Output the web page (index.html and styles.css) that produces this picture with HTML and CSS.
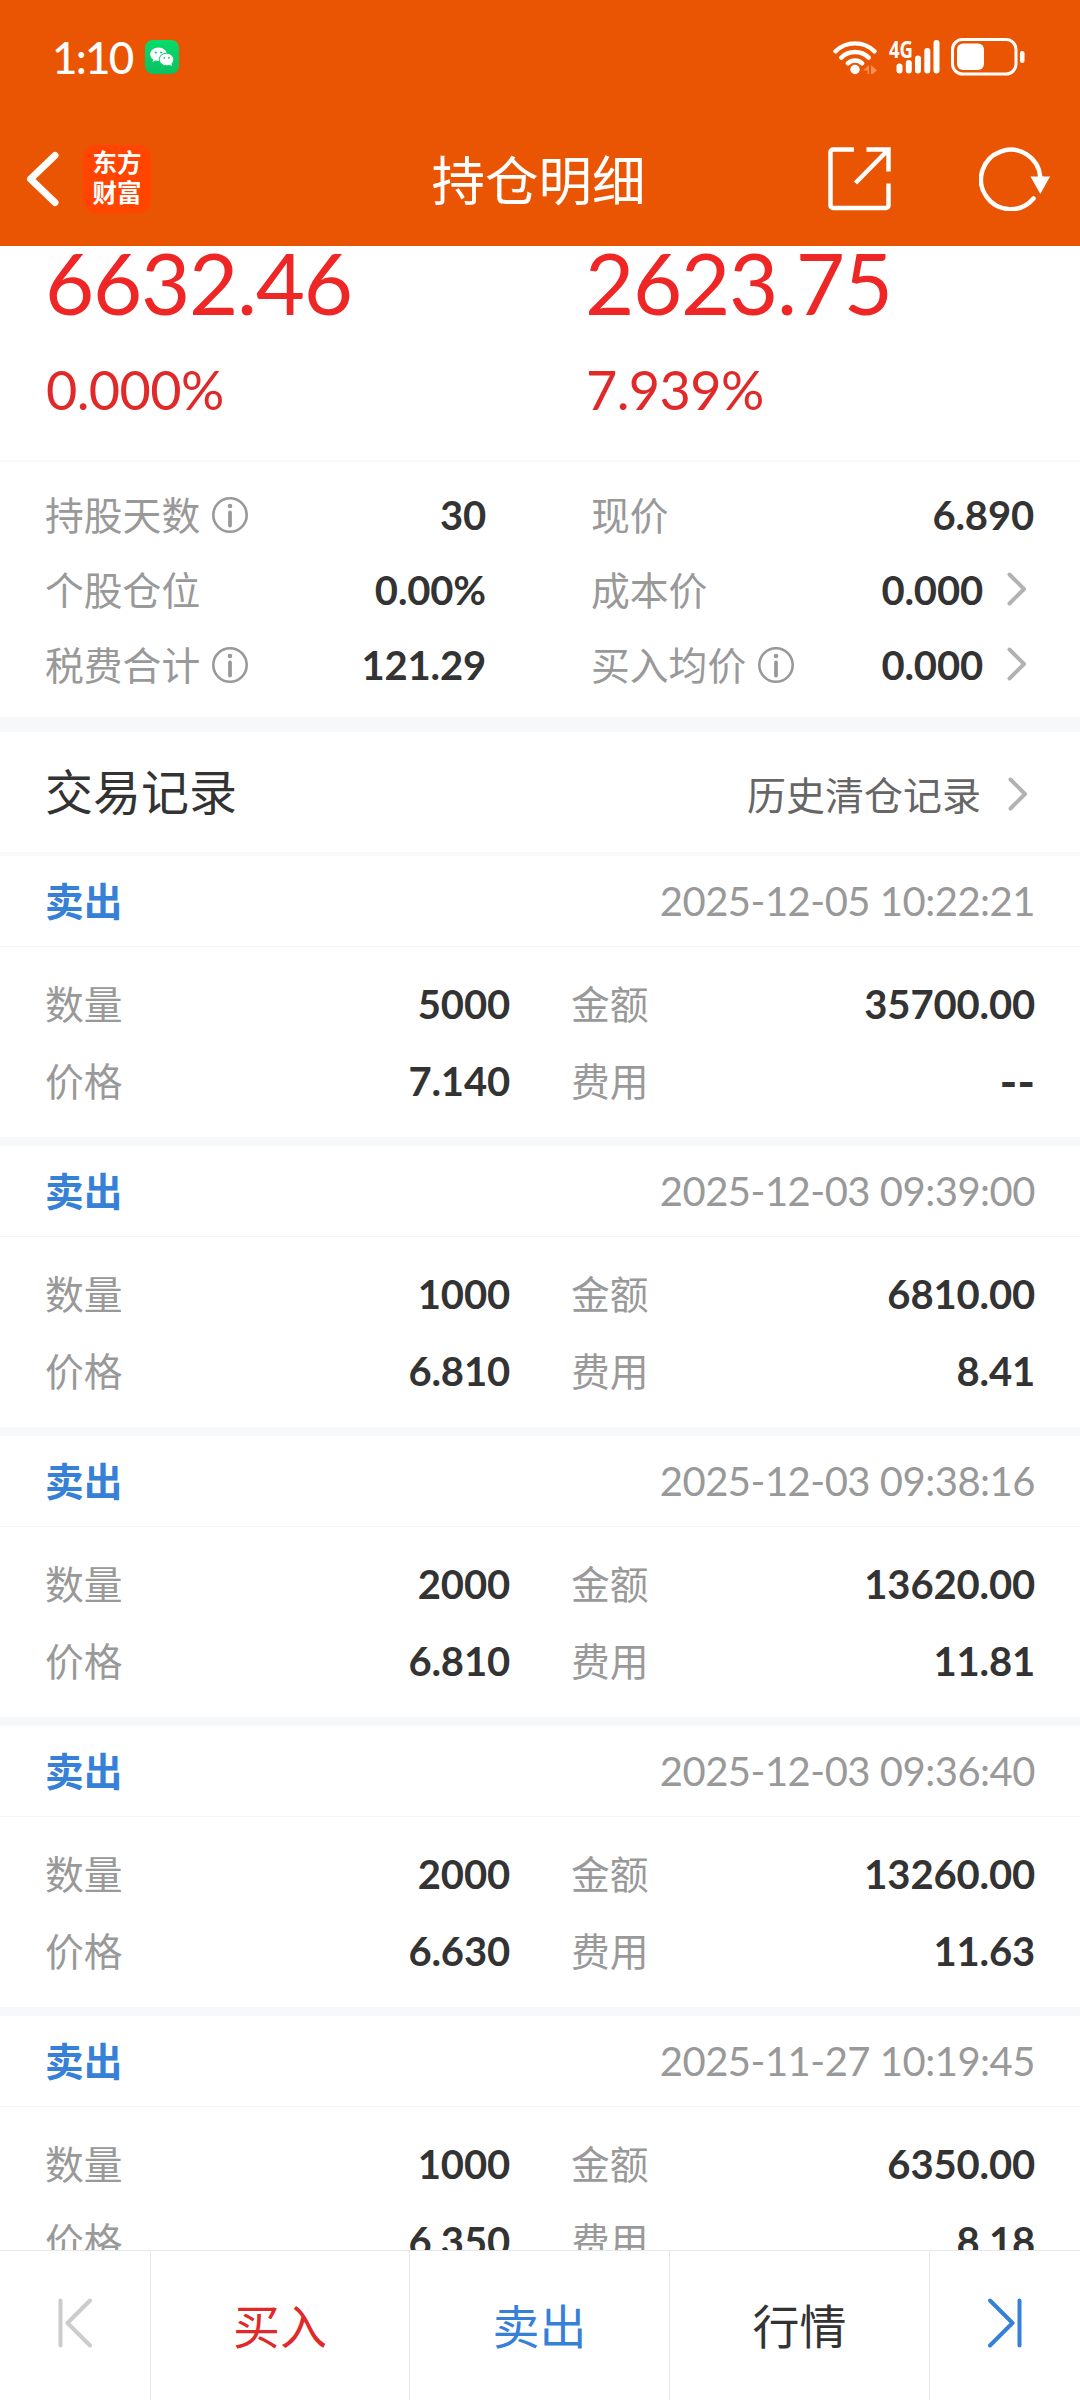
FILE: index.html
```html
<!DOCTYPE html>
<html lang="zh-CN">
<head>
  <meta charset="UTF-8" />
  <meta name="viewport" content="width=device-width, initial-scale=1.0" />
  <title>持仓明细</title>
  <link rel="stylesheet" href="styles.css">
</head>
<body>
  <header>
    <div class="status">
      <span class="time">1:10</span>
      <svg class="wechat" width="34" height="34" viewBox="0 0 34 34">
        <defs>
          <linearGradient id="verde" x1="0" y1="0" x2="0" y2="1"><stop offset="0" stop-color="#06dc6c" /><stop offset="1" stop-color="#0ac160" /></linearGradient>
        </defs>
        <rect width="34" height="34" rx="8" fill="url(#verde)" />
        <path d="M13.500 7.500C8.800 7.500 5.200 10.500 5.200 14.300c0 2.200 1.200 4 3 5.200l-.7 2.500 2.900-1.500c1 .3 2 .4 3.100.4 4.700 0 8.300-3 8.300-6.700s-3.600-6.700-8.300-6.700z" fill="#fff" />
        <ellipse cx="21.500" cy="19.500" rx="7.300" ry="6.300" fill="#fff" stroke="#09cf66" stroke-width="1" />
        <path d="M24 24.500l3 1.500-.6-3z" fill="#fff" />
        <circle cx="10.800" cy="12.500" r="1.100" fill="#09cf66" /><circle cx="16.200" cy="12.500" r="1.100" fill="#09cf66" />
        <circle cx="19.200" cy="17.800" r=".9" fill="#09cf66" /><circle cx="23.900" cy="17.800" r=".9" fill="#09cf66" />
      </svg>
      <svg class="wifi" width="44" height="36" viewBox="0 0 44 36" fill="none" stroke="#fff" stroke-width="4.400" stroke-linecap="round">
        <path d="M2.500 12.300a28 28 0 0 1 39 0" />
        <path d="M8.300 18.600a19.500 19.500 0 0 1 27.400 0" />
        <path d="M14.800 24.300a10.500 10.500 0 0 1 14.400 0" />
        <circle cx="22" cy="30.500" r="4.700" fill="#fff" stroke="none" />
        <path d="M30 31.500l6-5.500v9h-1.500v-3.500zM38 26l6 5.500-4.500 3.500H38z" fill="#ff9055" stroke="none" />
      </svg>
      <svg class="signal" width="52" height="36" viewBox="0 0 52 36">
        <text x="0" y="18.500" class="net" textLength="24" lengthAdjust="spacingAndGlyphs">4G</text>
        <g stroke="#fff" stroke-width="6" stroke-linecap="round">
          <path d="M10.500 27.500v4M19.800 24v7.500M29 19.500v12M38.300 12v19.500M47.500 4v27.500" />
        </g>
      </svg>
      <svg class="battery" width="74" height="38" viewBox="0 0 74 38">
        <rect x="1.500" y="1.500" width="63.500" height="34.500" rx="10" fill="none" stroke="#fff" stroke-width="3" />
        <rect x="6" y="5.500" width="27" height="26.500" rx="6" fill="#fff" />
        <rect x="69" y="13" width="4.500" height="12" rx="2.200" fill="#fff" />
      </svg>
    </div>
    <div class="bar">
      <div class="bar-left">
        <svg class="back" width="33" height="56" viewBox="0 0 33 56" fill="none" stroke="#fff" stroke-width="7" stroke-linecap="round" stroke-linejoin="round">
          <path d="M29 4.500L4.500 28 29 51.500" />
        </svg>
        <div class="logo"><span>东方</span><span>财富</span></div>
      </div>
      <h1>持仓明细</h1>
      <div class="bar-right">
        <svg width="64" height="64" viewBox="0 0 64 64" fill="none" stroke="#fff" stroke-width="4.500">
          <path d="M26 2.500H5a2.500 2.500 0 0 0-2.500 2.500V58.500a2.500 2.500 0 0 0 2.500 2.500H58a2.500 2.500 0 0 0 2.500-2.500V36.500" />
          <path d="M38.500 2.500H60.500V24.500M60 3L27.500 36" />
        </svg>
        <svg width="72" height="64" viewBox="0 0 72 64">
          <path d="M61.300 30A29.700 29.700 0 1 0 54.500 51.500" fill="none" stroke="#fff" stroke-width="4.500" stroke-linecap="round" />
          <path d="M51.500 29.500H71L61.300 47z" fill="#fff" />
        </svg>
      </div>
    </div>
  </header>

  <main>
    <div class="profit">
      <div class="profit-col"><p class="big">6632.46</p><p class="pct">0.000%</p></div>
      <div class="profit-col"><p class="big">2623.75</p><p class="pct">7.939%</p></div>
    </div>

    <div class="stats">
      <div class="stats-col">
        <div class="stat"><span>持股天数</span><svg class="info" viewBox="0 0 36 36"><circle cx="18" cy="18" r="16.700" /><path d="M18 15.500v13" /><circle class="dot" cx="18" cy="9" r="2.300" /></svg><b>30</b></div>
        <div class="stat"><span>个股仓位</span><b>0.00%</b></div>
        <div class="stat"><span>税费合计</span><svg class="info" viewBox="0 0 36 36"><circle cx="18" cy="18" r="16.700" /><path d="M18 15.500v13" /><circle class="dot" cx="18" cy="9" r="2.300" /></svg><b>121.29</b></div>
      </div>
      <div class="stats-col">
        <div class="stat"><span>现价</span><b>6.890</b></div>
        <div class="stat"><span>成本价</span><b>0.000</b><svg class="arrow" viewBox="0 0 20 34"><path d="M2.500 2.500L17 17 2.500 31.500" /></svg></div>
        <div class="stat"><span>买入均价</span><svg class="info" viewBox="0 0 36 36"><circle cx="18" cy="18" r="16.700" /><path d="M18 15.500v13" /><circle class="dot" cx="18" cy="9" r="2.300" /></svg><b>0.000</b><svg class="arrow" viewBox="0 0 20 34"><path d="M2.500 2.500L17 17 2.500 31.500" /></svg></div>
      </div>
    </div>

    <div class="list-title">
      <h2>交易记录</h2>
      <a class="history">历史清仓记录</a>
      <svg class="arrow" viewBox="0 0 20 34"><path d="M2.500 2.500L17 17 2.500 31.500" /></svg>
    </div>

    <div class="record">
      <div class="record-head"><h3>卖出</h3><time>2025-12-05 10:22:21</time></div>
      <div class="record-body">
        <div class="cell"><span>数量</span><b>5000</b></div><div class="cell"><span>金额</span><b>35700.00</b></div>
        <div class="cell"><span>价格</span><b>7.140</b></div><div class="cell"><span>费用</span><b class="empty">--</b></div>
      </div>
    </div>
    <div class="record">
      <div class="record-head"><h3>卖出</h3><time>2025-12-03 09:39:00</time></div>
      <div class="record-body">
        <div class="cell"><span>数量</span><b>1000</b></div><div class="cell"><span>金额</span><b>6810.00</b></div>
        <div class="cell"><span>价格</span><b>6.810</b></div><div class="cell"><span>费用</span><b>8.41</b></div>
      </div>
    </div>
    <div class="record">
      <div class="record-head"><h3>卖出</h3><time>2025-12-03 09:38:16</time></div>
      <div class="record-body">
        <div class="cell"><span>数量</span><b>2000</b></div><div class="cell"><span>金额</span><b>13620.00</b></div>
        <div class="cell"><span>价格</span><b>6.810</b></div><div class="cell"><span>费用</span><b>11.81</b></div>
      </div>
    </div>
    <div class="record">
      <div class="record-head"><h3>卖出</h3><time>2025-12-03 09:36:40</time></div>
      <div class="record-body">
        <div class="cell"><span>数量</span><b>2000</b></div><div class="cell"><span>金额</span><b>13260.00</b></div>
        <div class="cell"><span>价格</span><b>6.630</b></div><div class="cell"><span>费用</span><b>11.63</b></div>
      </div>
    </div>
    <div class="record">
      <div class="record-head"><h3>卖出</h3><time>2025-11-27 10:19:45</time></div>
      <div class="record-body">
        <div class="cell"><span>数量</span><b>1000</b></div><div class="cell"><span>金额</span><b>6350.00</b></div>
        <div class="cell"><span>价格</span><b>6.350</b></div><div class="cell"><span>费用</span><b>8.18</b></div>
      </div>
    </div>
  </main>

  <nav>
    <a class="prev"><svg width="34" height="50" viewBox="0 0 34 50"><path d="M2.500 2.500v45M32 2.500L9.500 25 32 47.500" /></svg></a>
    <a class="buy">买入</a>
    <a class="sell">卖出</a>
    <a>行情</a>
    <a class="next"><svg width="34" height="50" viewBox="0 0 34 50"><path d="M31.500 2.500v45M2 2.500L24.500 25 2 47.500" /></svg></a>
  </nav>
</body>
</html>
```

FILE: styles.css
```css
* {
  box-sizing: border-box;
}

body {
  margin: 0;
  width: 1080px;
  height: 2400px;
  display: flex;
  flex-direction: column;
  overflow: hidden;
  background-color: #fff;
  color: #333;
  font-family: Lato, "Noto Sans CJK SC", sans-serif;
}

h1, h2, h3, p {
  margin: 0;
  font-weight: normal;
}

svg {
  display: block;
  flex: none;
}

header {
  flex: none;
  height: 246px;
  background-color: #ea5504;
  color: #fff;
}

.status {
  display: flex;
  align-items: center;
  height: 114px;
  padding: 0 55px 0 52px;
}

.time {
  width: 93px;
  font-size: 44px;
  font-weight: 500;
  letter-spacing: -1.8px;
  white-space: nowrap;
}

.wifi {
  margin-left: auto;
}

.signal {
  margin-left: 12px;
  overflow: visible;
}

.net {
  font: bold 23px "Open Sans", sans-serif;
  fill: #fff;
}

.battery {
  margin-left: 10px;
}

.bar {
  display: grid;
  grid-template-columns: 1fr auto 1fr;
  align-items: center;
  height: 129px;
  padding: 0 29px 0 26px;
}

.bar-left {
  display: flex;
  align-items: center;
  gap: 24px;
}

.logo {
  display: flex;
  flex-direction: column;
  width: 68px;
  height: 68px;
  padding-top: 2px;
  border-radius: 13px;
  background-color: #ff4500;
  font: bold 24.500px/30px "Noto Sans CJK SC", sans-serif;
  text-align: center;
}

h1 {
  padding-top: 2px;
  font-size: 53.500px;
  line-height: 80px;
}

.bar-right {
  display: flex;
  justify-content: flex-end;
  gap: 87px;
}

main {
  flex: 1;
  min-height: 0;
  overflow: hidden;
}

.profit {
  display: grid;
  grid-template-columns: 540px 540px;
  height: 216px;
  border-bottom: 2px solid #f8f9fa;
  color: #ee2625;
}

.profit-col {
  padding-left: 45px;
}

.big {
  font-size: 85px;
  line-height: 72px;
  letter-spacing: -1.300px;
}

.pct {
  margin-top: 42px;
  padding-left: 1px;
  font-size: 54px;
  line-height: 60px;
  letter-spacing: -.6px;
  color: #e02a2a;
}

.stats {
  display: grid;
  grid-template-columns: 441px 443px;
  column-gap: 105px;
  height: 270px;
  padding: 16px 45px 0;
  border-bottom: 15px solid #f6f8fa;
}

.stat {
  display: flex;
  align-items: center;
  height: 75px;
}

.stat span,
.cell span {
  margin-top: -6px;
  font-size: 38.800px;
  color: #999;
}

.stat b,
.cell b {
  margin: -2px 0 0 auto;
  font-size: 40px;
  font-weight: bold;
  letter-spacing: -.15px;
}

.info {
  width: 36px;
  height: 36px;
  margin: -2px 0 0 12px;
  fill: none;
  stroke: #999;
  stroke-width: 2.600;
}

.info path {
  stroke-width: 3.800;
  stroke-linecap: round;
}

.info .dot {
  fill: #999;
  stroke: none;
}

.arrow {
  width: 20px;
  height: 34px;
  margin: -3px 7px 0 24px;
  fill: none;
  stroke: #b2b2b2;
  stroke-width: 4;
  stroke-linecap: round;
  stroke-linejoin: round;
}

.list-title {
  display: flex;
  align-items: center;
  height: 124px;
  padding: 0 46px 0 45px;
  border-bottom: 4px solid #f8f9fa;
}

h2 {
  margin-top: -6px;
  font-size: 48px;
}

.history {
  margin: 1px 3px 0 auto;
  font-size: 39px;
  color: #666;
}

.list-title .arrow {
  margin: 4px 6px 0 24px;
}

.record {
  height: 290px;
  border-bottom: 9px solid #f6f8fa;
}

.record-head {
  display: flex;
  justify-content: space-between;
  align-items: center;
  height: 91px;
  padding: 0 45px;
  border-bottom: 1px solid #f4f5f6;
}

h3 {
  margin-top: -5px;
  font-size: 38.700px;
  font-weight: bold;
  color: #3780d8;
}

time {
  font-size: 40px;
  letter-spacing: -.5px;
  color: #999;
}

.record-body {
  display: grid;
  grid-template-columns: 465px 464px;
  column-gap: 61px;
  padding: 19px 45px 0;
}

.cell {
  display: flex;
  align-items: center;
  height: 77px;
}

.cell .empty {
  font-size: 48px;
  line-height: 48px;
}

nav {
  flex: none;
  display: grid;
  grid-template-columns: 151px 259px 260px 260px 150px;
  height: 150px;
  border-top: 1px solid #e8e8e8;
  background-color: #fff;
}

nav a {
  display: flex;
  justify-content: center;
  align-items: center;
  padding-bottom: 5px;
  border-right: 1px solid #e8e8e8;
  font-size: 47px;
}

nav a:last-child {
  border-right: none;
}

nav svg {
  fill: none;
  stroke-width: 4;
  stroke-linecap: round;
  stroke-linejoin: round;
}

.prev {
  stroke: #ccc;
}

.next {
  stroke: #3780d8;
}

.buy {
  color: #e02a2a;
}

.sell {
  color: #3780d8;
}
```
